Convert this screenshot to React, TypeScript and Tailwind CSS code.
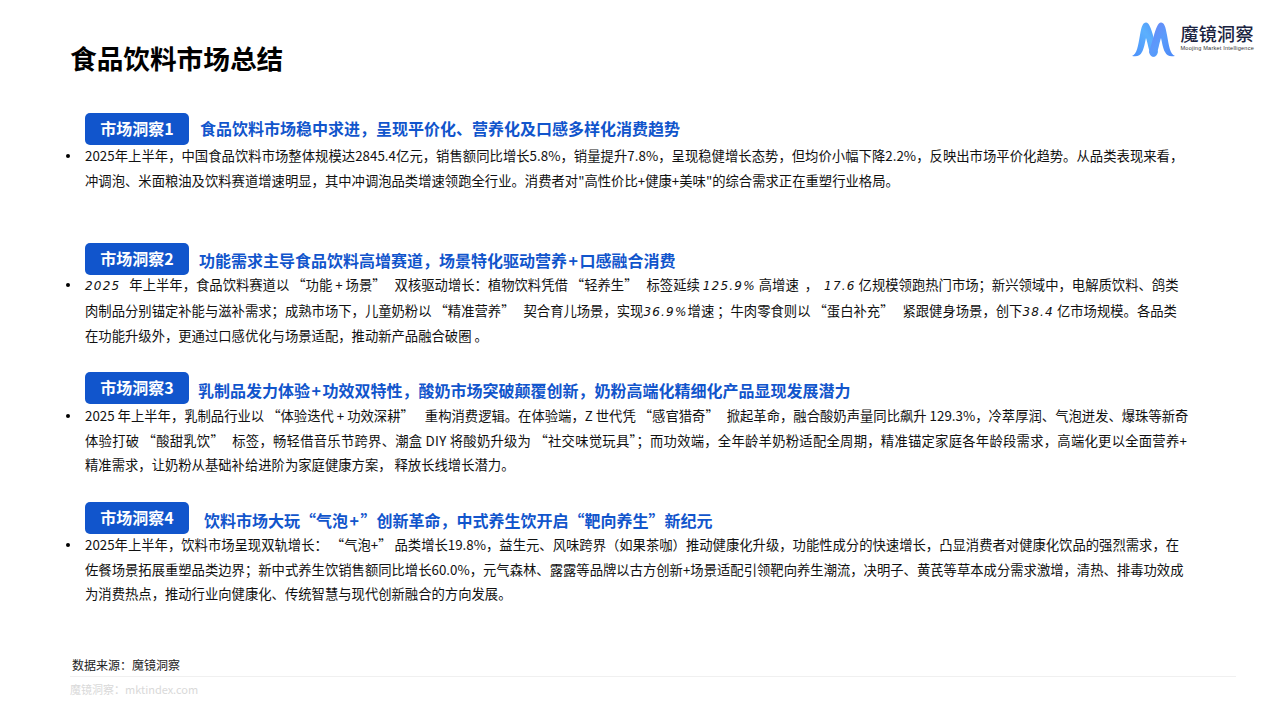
const Num = ({ children }: { children: React.ReactNode }) => (
  <span className="font-['DejaVu_Sans',sans-serif] italic text-[12px] tracking-[1.2px]">{children}</span>
);

const Plus = () => <span className="mx-[1.5px]">+</span>;

// the wider blank that follows a closing quote in the source slide
const Gap = ({ w = "w-[5px]" }: { w?: string }) => <span className={"inline-block " + w} />;

type Section = {
  label: string;
  title: React.ReactNode;
  titleClass: string;
  boxClass: string;
  listClass: string;
  lines: React.ReactNode[];
};

const sections: Section[] = [
  {
    label: "市场洞察1",
    title: "食品饮料市场稳中求进，呈现平价化、营养化及口感多样化消费趋势",
    titleClass: "ml-[11px] mt-[3px]",
    boxClass: "mt-[19px]",
    listClass: "mt-[-1px]",
    lines: [
      <span className="tracking-[0.03px]">
        2025年上半年，中国食品饮料市场整体规模达2845.4亿元，销售额同比增长5.8%，销量提升7.8%，呈现稳健增长态势，但均价小幅下降2.2%，反映出市场平价化趋势。从品类表现来看，
      </span>,
      "冲调泡、米面粮油及饮料赛道增速明显，其中冲调泡品类增速领跑全行业。消费者对\"高性价比+健康+美味\"的综合需求正在重塑行业格局。",
    ],
  },
  {
    label: "市场洞察2",
    title: <>功能需求主导食品饮料高增赛道，场景特化驱动营养<Plus />口感融合消费</>,
    titleClass: "ml-[10px] mt-[5px]",
    boxClass: "mt-[49.8px]",
    listClass: "mt-[-2px]",
    lines: [
      <>
        <Num>2025</Num><Gap w="w-[6px]" /> 年上半年，食品饮料赛道以 “功能 + 场景”<Gap w="w-[6px]" /> 双核驱动增长：植物饮料凭借 “轻养生”<Gap w="w-[6px]" /> 标签延续 <Num>125.9%</Num> 高增速<Gap w="w-[3px]" /> ，<Gap w="w-[3px]" /> <Num>17.6</Num> 亿规模领跑热门市场；新兴领域中，电解质饮料、鸽类
      </>,
      <>
        肉制品分别锚定补能与滋补需求；成熟市场下，儿童奶粉以 “精准营养”<Gap w="w-[6px]" /> 契合育儿场景，实现<Num>36.9%</Num>增速 ；牛肉零食则以 “蛋白补充”<Gap w="w-[6px]" /> 紧跟健身场景，创下<Num>38.4</Num> 亿市场规模。各品类
      </>,
      "在功能升级外，更通过口感优化与场景适配，推动新产品融合破圈 。",
    ],
  },
  {
    label: "市场洞察3",
    title: <>乳制品发力体验<Plus />功效双特性，酸奶市场突破颠覆创新，奶粉高端化精细化产品显现发展潜力</>,
    titleClass: "ml-[9px] mt-[6px]",
    boxClass: "mt-[23.2px]",
    listClass: "mt-[0px]",
    lines: [
      <>
        2025 年上半年，乳制品行业以 “体验迭代 + 功效深耕”<Gap w="w-[8px]" /> 重构消费逻辑。在体验端，Z 世代凭 “感官猎奇”<Gap w="w-[5px]" /> 掀起革命，融合酸奶声量同比飙升 129.3%，冷萃厚润、气泡迸发、爆珠等新奇
      </>,
      <span className="tracking-[0.25px]">
        体验打破 “酸甜乳饮”<Gap w="w-[5px]" /> 标签，畅轻借音乐节跨界、潮盒 DIY 将酸奶升级为 “社交味觉玩具”；而功效端，全年龄羊奶粉适配全周期，精准锚定家庭各年龄段需求，高端化更以全面营养+
      </span>,
      "精准需求，让奶粉从基础补给进阶为家庭健康方案， 释放长线增长潜力。",
    ],
  },
  {
    label: "市场洞察4",
    title: <>饮料市场大玩“气泡<Plus />”创新革命，中式养生饮开启“靶向养生”新纪元</>,
    titleClass: "ml-[15px] mt-[6px]",
    boxClass: "mt-[24.2px]",
    listClass: "mt-[-1px]",
    lines: [
      "2025年上半年，饮料市场呈现双轨增长： “气泡+” 品类增长19.8%，益生元、风味跨界（如果茶咖）推动健康化升级，功能性成分的快速增长，凸显消费者对健康化饮品的强烈需求，在",
      "佐餐场景拓展重塑品类边界；新中式养生饮销售额同比增长60.0%，元气森林、露露等品牌以古方创新+场景适配引领靶向养生潮流，决明子、黄芪等草本成分需求激增，清热、排毒功效成",
      "为消费热点，推动行业向健康化、传统智慧与现代创新融合的方向发展。",
    ],
  },
];

const Logo = () => (
  <div className="flex items-start">
    <svg width="43" height="36" viewBox="0 0 43 36" className="mr-[6px] mt-[2px]">
      <defs>
        <linearGradient id="mL" x1="0" y1="1" x2="1" y2="0">
          <stop offset="0" stopColor="#4a8ffb" />
          <stop offset="0.6" stopColor="#5cb0fd" />
          <stop offset="1" stopColor="#4f93f8" />
        </linearGradient>
        <linearGradient id="mR" x1="0" y1="0" x2="1" y2="1">
          <stop offset="0" stopColor="#6d83f6" />
          <stop offset="0.5" stopColor="#5a9cfb" />
          <stop offset="1" stopColor="#4a88f8" />
        </linearGradient>
      </defs>
      <path d="M0 34 C5 32 6 24 8 13 C9.5 4 11 0.5 14 0.5 C17 0.5 19 6 21.5 15 L26 30 C25 35 21 36 19 33 C17 30 15.5 20 14 16 C13 20 12 27 10 30 C8 34 5 35 0 34Z" fill="url(#mL)" />
      <path d="M43 34 C38 32 37 24 35 13 C33.5 4 32 0.5 29 0.5 C26 0.5 24 6 21.5 15 L17 30 C18 35 22 36 24 33 C26 30 27.5 20 29 16 C30 20 31 27 33 30 C35 34 38 35 43 34Z" fill="url(#mR)" />
    </svg>
    <div className="flex flex-col mt-[2px]">
      <span className="text-[18px] leading-[23px] font-medium text-[#1a2340] tracking-[0.3px]">魔镜洞察</span>
      <span className="font-['Liberation_Sans',sans-serif] text-[5.6px] leading-[7px] text-[#333] tracking-[0.2px] whitespace-nowrap">Moojing Market Intelligence</span>
    </div>
  </div>
);

export default function App() {
  return (
    <div className="w-[1280px] h-[720px] bg-white overflow-hidden flex flex-col font-['Noto_Sans_CJK_SC','Noto_Sans',sans-serif]">
      <div className="flex justify-between items-start h-[94px] pl-[70px] pr-[26px]">
        <h1 className="mt-[39px] text-[26.67px] leading-[38px] font-bold text-black">食品饮料市场总结</h1>
        <div className="mt-[20px]">
          <Logo />
        </div>
      </div>

      {sections.map((s) => (
        <section key={s.label} className={s.boxClass}>
          <div className="flex items-start pl-[85px]">
            <div className="w-[104px] h-[32px] pb-[2px] rounded-[5px] bg-[#1155cc] flex items-center justify-center text-white text-[16px] font-bold">
              {s.label}
            </div>
            <div className={"text-[#1155cc] text-[16px] leading-[24px] font-bold whitespace-nowrap " + s.titleClass}>{s.title}</div>
          </div>
          <ul className={"pl-[85px] relative " + s.listClass}>
            <span className="absolute left-[66px] top-[10px] w-[4px] h-[4px] rounded-full bg-black" />
            {s.lines.map((l, i) => (
              <li key={i} className="text-[13.33px] leading-[24.6px] text-[#111] whitespace-nowrap">
                {l}
              </li>
            ))}
          </ul>
        </section>
      ))}

      <div className="mt-auto pl-[72px] text-[12px] leading-[16px] text-[#222]">数据来源：魔镜洞察</div>
      <div className="mt-[3px] ml-[70px] w-[1166px] border-t border-[#f0f0f0] pt-[4px] pb-[23px] text-[11px] leading-[16px] text-[#d9d9d9]">
        魔镜洞察：mktindex.com
      </div>
    </div>
  );
}
